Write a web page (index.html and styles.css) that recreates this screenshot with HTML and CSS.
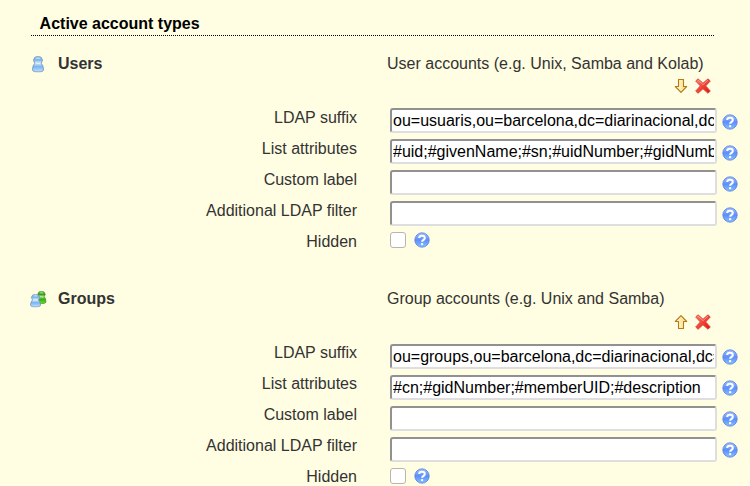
FILE: index.html
```html
<!DOCTYPE html>
<html lang="en">
<head>
<meta charset="utf-8">
<title>Active account types</title>
<link rel="stylesheet" href="styles.css">
</head>
<body>
<svg class="defs" width="0" height="0" aria-hidden="true">
  <defs>
    <linearGradient id="blue" x2="0" y2="1"><stop offset="0" stop-color="#b5d8f8"/><stop offset=".22" stop-color="#79b2ea"/><stop offset=".42" stop-color="#d5eafb"/><stop offset=".65" stop-color="#7ab5ef"/><stop offset="1" stop-color="#c3e2fc"/></linearGradient>
    <linearGradient id="green" x2="0" y2="1"><stop offset="0" stop-color="#82cf5c"/><stop offset=".25" stop-color="#3c9f18"/><stop offset=".42" stop-color="#a0dd80"/><stop offset=".65" stop-color="#35ad0c"/><stop offset="1" stop-color="#6ee32d"/></linearGradient>
    <linearGradient id="gold" x2="1" y2="0"><stop offset="0" stop-color="#fffbe0"/><stop offset="1" stop-color="#fbdc82"/></linearGradient>
    <linearGradient id="red" x2="1" y2="1"><stop offset="0" stop-color="#ff8170"/><stop offset=".5" stop-color="#f24336"/><stop offset="1" stop-color="#e01010"/></linearGradient>
    <linearGradient id="ball" x2="0" y2="1"><stop offset="0" stop-color="#a3c2fd"/><stop offset=".5" stop-color="#5c8efb"/><stop offset="1" stop-color="#86c0ff"/></linearGradient>
    <symbol id="pawn" viewBox="0 0 13 17" preserveAspectRatio="none"><path d="M3.2 1.2Q6.5-.1 9.8 1.2Q12.8 4.4 10 7.5Q12.2 9.5 12.6 14.3Q11.8 16.5 6.5 16.5Q1.2 16.5.4 14.3Q.8 9.5 3 7.5Q.2 4.4 3.2 1.2Z"/><path d="M4.5 2.4H8.5M4 7.6H9" fill="none" stroke="#fff" stroke-opacity=".55"/></symbol>
    <symbol id="down" viewBox="0 0 16 16"><path d="M5.5 1.5H10.5V8.5H13.7L8 14.4L2.3 8.5H5.5Z" fill="url(#gold)" stroke="#b67a14" stroke-width="1.1" stroke-linejoin="round"/></symbol>
    <symbol id="cross" viewBox="0 0 16 16"><path d="M3 .8L8 5.2L13 .8L15.3 3L10.7 7.9L15.3 13L13 15.3L8 10.8L3 15.3L.7 13L5.3 7.9L.7 3Z" fill="url(#red)" stroke="#d8463c" stroke-width=".9" stroke-linejoin="round"/><path d="M3 2.2L8 6.6L13 2.2" fill="none" stroke="#ffaaa0" stroke-opacity=".7"/></symbol>
    <symbol id="help" viewBox="0 0 16 16"><circle cx="8" cy="8" r="7.2" fill="url(#ball)" stroke="#5480dc" stroke-width=".8"/><path d="M5.2 6.1Q5.2 3.7 8 3.7Q10.8 3.7 10.8 6Q10.8 7.3 9.4 8Q8.1 8.7 8.1 9.8" fill="none" stroke="#fff" stroke-width="2"/><circle cx="8.1" cy="12.1" r="1.2" fill="#fff"/></symbol>
  </defs>
</svg>
<main class="panel">
  <h1 class="title">Active account types</h1>

  <section class="account">
    <header class="head">
      <svg class="type" viewBox="0 0 18 18"><use href="#pawn" x="3" y="1" width="12" height="16.5" fill="url(#blue)" stroke="#7095bb" stroke-width=".9"/></svg>
      <h2 class="name">Users</h2>
      <p class="about">User accounts (e.g. Unix, Samba and Kolab)</p>
    </header>
    <div class="actions">
      <svg class="icon"><use href="#down"/></svg>
      <svg class="icon"><use href="#cross"/></svg>
    </div>
    <div class="row"><label>LDAP suffix</label><input class="field" type="text" value="ou=usuaris,ou=barcelona,dc=diarinacional,dc=cat"><svg class="icon"><use href="#help"/></svg></div>
    <div class="row"><label>List attributes</label><input class="field" type="text" value="#uid;#givenName;#sn;#uidNumber;#gidNumber"><svg class="icon"><use href="#help"/></svg></div>
    <div class="row"><label>Custom label</label><input class="field" type="text"><svg class="icon"><use href="#help"/></svg></div>
    <div class="row"><label>Additional LDAP filter</label><input class="field" type="text"><svg class="icon"><use href="#help"/></svg></div>
    <div class="row"><label>Hidden</label><span class="checks"><input class="check" type="checkbox"><svg class="icon"><use href="#help"/></svg></span></div>
  </section>

  <section class="account">
    <header class="head">
      <svg class="type" viewBox="0 0 18 18"><use href="#pawn" x="7.5" y="1" width="10" height="13" fill="url(#green)" stroke="#3c8a24" stroke-width=".9"/><use href="#pawn" x="1" y="4" width="11" height="13.5" fill="url(#blue)" stroke="#7095bb" stroke-width=".9"/></svg>
      <h2 class="name">Groups</h2>
      <p class="about">Group accounts (e.g. Unix and Samba)</p>
    </header>
    <div class="actions">
      <svg class="icon up"><use href="#down"/></svg>
      <svg class="icon"><use href="#cross"/></svg>
    </div>
    <div class="row"><label>LDAP suffix</label><input class="field" type="text" value="ou=groups,ou=barcelona,dc=diarinacional,dc=cat"><svg class="icon"><use href="#help"/></svg></div>
    <div class="row"><label>List attributes</label><input class="field" type="text" value="#cn;#gidNumber;#memberUID;#description"><svg class="icon"><use href="#help"/></svg></div>
    <div class="row"><label>Custom label</label><input class="field" type="text"><svg class="icon"><use href="#help"/></svg></div>
    <div class="row"><label>Additional LDAP filter</label><input class="field" type="text"><svg class="icon"><use href="#help"/></svg></div>
    <div class="row"><label>Hidden</label><span class="checks"><input class="check" type="checkbox"><svg class="icon"><use href="#help"/></svg></span></div>
  </section>
</main>
</body>
</html>
```

FILE: styles.css
```css
* { box-sizing: border-box; }

body {
  margin: 0;
  background: #fffde2;
  color: #333;
  font: 16px/18px "Liberation Sans", Arial, sans-serif;
}

.defs { position: absolute; }

.panel { padding: 15px 0 0 30px; }

.title {
  width: 683px;
  height: 21px;
  margin: 0 0 18px 1px;
  padding-left: 8.6px;
  border-bottom: 1px dotted #000;
  color: #000;
  font-size: 16px;
  line-height: 18px;
}

.account + .account { margin-top: 26.5px; }

.head {
  display: grid;
  grid-template-columns: 28px 329px 1fr;
  height: 24px;
}

.name,
.about { margin: 0; padding-top: .5px; font-size: 16px; }

.type { width: 18px; height: 18px; margin-top: .9px; margin-left: -1px; }

.icon { width: 16px; height: 16px; display: block; }

.up { transform: scaleY(-1); }

.actions {
  display: flex;
  gap: 6px;
  height: 30px;
  padding-left: 643px;
}

.row {
  display: grid;
  grid-template-columns: 327px 327px 16px;
  align-items: start;
  height: 31px;
}

.row:last-child { height: 18.5px; margin-bottom: -.5px; }

.account:first-of-type .row:last-child { height: 31px; margin-bottom: 0; }

.row label { text-align: right; padding-top: .6px; height: 18px; }

.row .field { margin-left: 33px; margin-right: -33px; }

.row > .icon { margin: 5.9px 0 0 38px; }

.field {
  height: 25px;
  padding: 1.8px 1px .2px;
  border: 2px solid;
  border-color: #919191 #dedee0 #dedee0 #919191;
  border-radius: 3px;
  background: #fff;
  color: #000;
  font: inherit;
}

.checks {
  display: flex;
  gap: 8px;
  padding-left: 33px;
}

.check {
  appearance: none;
  width: 16px;
  height: 16px;
  margin: 0;
  border: 1px solid #b9b4ae;
  border-radius: 3px;
  background: #fff;
}
```
